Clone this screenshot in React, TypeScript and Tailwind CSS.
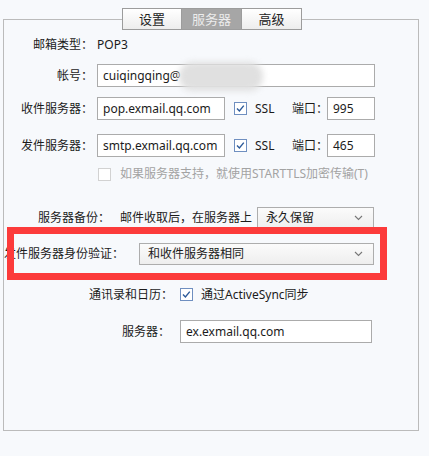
import React from 'react';

const font = { fontFamily: '"Noto Sans", "Noto Sans CJK SC", sans-serif' };

const Check = ({ checked = true, disabled = false }: { checked?: boolean; disabled?: boolean }) => (
  <svg width="13" height="13" viewBox="0 0 13 13" className="shrink-0">
    <rect x="0.5" y="0.5" width="12" height="12" fill="#fff" stroke={disabled ? '#d2d2d2' : '#6f8fc0'} />
    {checked && (
      <path d="M3 6.6 L5.4 9 L9.8 3.6" fill="none" stroke="#2c5a9a" strokeWidth="1.4" />
    )}
  </svg>
);

const Chevron = () => (
  <svg width="9" height="6" viewBox="0 0 9 6" className="shrink-0">
    <path d="M1 1 L4.5 4.5 L8 1" fill="none" stroke="#777" strokeWidth="1.1" />
  </svg>
);

const Field = ({ w, value }: { w: string; value: string }) => (
  <div className={`${w} shrink-0 h-[23px] border border-[#ababab] bg-white flex items-center px-[5px] text-[12px] text-[#1b1b1b] whitespace-nowrap`}>
    {value}
  </div>
);

const Select = ({ w, value }: { w: string; value: string }) => (
  <div className={`${w} shrink-0 h-[22px] border border-[#adadad] bg-gradient-to-b from-[#fbfbfb] to-[#eeeeee] flex items-center justify-between pl-[8px] pr-[10px] text-[12px] text-[#1b1b1b]`}>
    <span>{value}</span>
    <Chevron />
  </div>
);

export default function App() {
  const tabs = ['设置', '服务器', '高级'];
  return (
    <div className="relative w-[429px] h-[456px] bg-[#f7f9fc] pt-[8px] overflow-hidden text-[12px] text-[#1b1b1b] leading-none whitespace-nowrap" style={font}>
      <div className="relative z-10 flex ml-[122px]">
        {tabs.map((t, i) => (
          <div
            key={t}
            className={
              i === 1
                ? 'w-[60px] h-[22px] flex items-center justify-center border border-[#9c9c9c] border-l-0 bg-[#a6a6a6] text-[#ececec] text-[13px]'
                : `w-[60px] h-[22px] flex items-center justify-center border border-[#9c9c9c] ${i > 0 ? 'border-l-0' : ''} bg-gradient-to-b from-white to-[#ededed] text-[#222] text-[13px]`
            }
          >
            {t}
          </div>
        ))}
      </div>

      <div className="relative ml-[3px] mt-[-11px] w-[416px] h-[412px] border border-[#bbbbbb] flex flex-col">
        {/* 邮箱类型 */}
        <div className="flex items-center h-[18px] mt-[16px]">
          <span className="w-[89px] shrink-0 text-right">邮箱类型：</span>
          <span className="ml-[4px]">POP3</span>
        </div>

        <div className="flex items-center h-[23px] mt-[10px]">
          <span className="w-[89px] shrink-0 text-right">帐号：</span>
          <div className="ml-[4px] relative">
            <Field w="w-[278px]" value="cuiqingqing@" />
            <div className="absolute left-[82px] top-[-2px] w-[84px] h-[29px] rounded-[14px] bg-[#e0e0e0] blur-[3px]" />
          </div>
        </div>

        <div className="flex items-center h-[23px] mt-[10px]">
          <span className="w-[89px] shrink-0 text-right">收件服务器：</span>
          <div className="ml-[4px]"><Field w="w-[128px]" value="pop.exmail.qq.com" /></div>
          <div className="ml-[9px]"><Check /></div>
          <span className="ml-[8px] w-[37px] shrink-0">SSL</span>
          <span className="w-[35px] shrink-0">端口：</span>
          <Field w="w-[48px]" value="995" />
        </div>

        <div className="flex items-center h-[23px] mt-[14px]">
          <span className="w-[89px] shrink-0 text-right">发件服务器：</span>
          <div className="ml-[4px]"><Field w="w-[128px]" value="smtp.exmail.qq.com" /></div>
          <div className="ml-[9px]"><Check /></div>
          <span className="ml-[8px] w-[37px] shrink-0">SSL</span>
          <span className="w-[35px] shrink-0">端口：</span>
          <Field w="w-[48px]" value="465" />
        </div>

        <div className="flex items-center h-[16px] mt-[9px] ml-[94px]">
          <Check checked={false} disabled />
          <span className="ml-[9px] text-[#a3a3a3]">如果服务器支持，就使用STARTTLS加密传输(T)</span>
        </div>

        <div className="flex items-center h-[22px] mt-[25px] ml-[34px]">
          <span className="w-[82px] shrink-0">服务器备份：</span>
          <span>邮件收取后，在服务器上</span>
          <div className="ml-[5px]"><Select w="w-[117px]" value="永久保留" /></div>
        </div>

        <div className="flex items-center h-[22px] mt-[14px]">
          <span className="w-[135px] shrink-0">发件服务器身份验证：</span>
          <Select w="w-[235px]" value="和收件服务器相同" />
        </div>

        <div className="flex items-center h-[17px] mt-[21px] ml-[85px]">
          <span className="w-[91px] shrink-0">通讯录和日历：</span>
          <Check />
          <span className="ml-[8px]">通过ActiveSync同步</span>
        </div>

        <div className="flex items-center h-[23px] mt-[17px] ml-[118px]">
          <span className="w-[58px] shrink-0">服务器：</span>
          <Field w="w-[192px]" value="ex.exmail.qq.com" />
        </div>
      </div>

      {/* annotation box */}
      <div className="absolute left-[7px] top-[227px] w-[380px] h-[53px] border-[7px] border-[#fc3b3b]" />
    </div>
  );
}
